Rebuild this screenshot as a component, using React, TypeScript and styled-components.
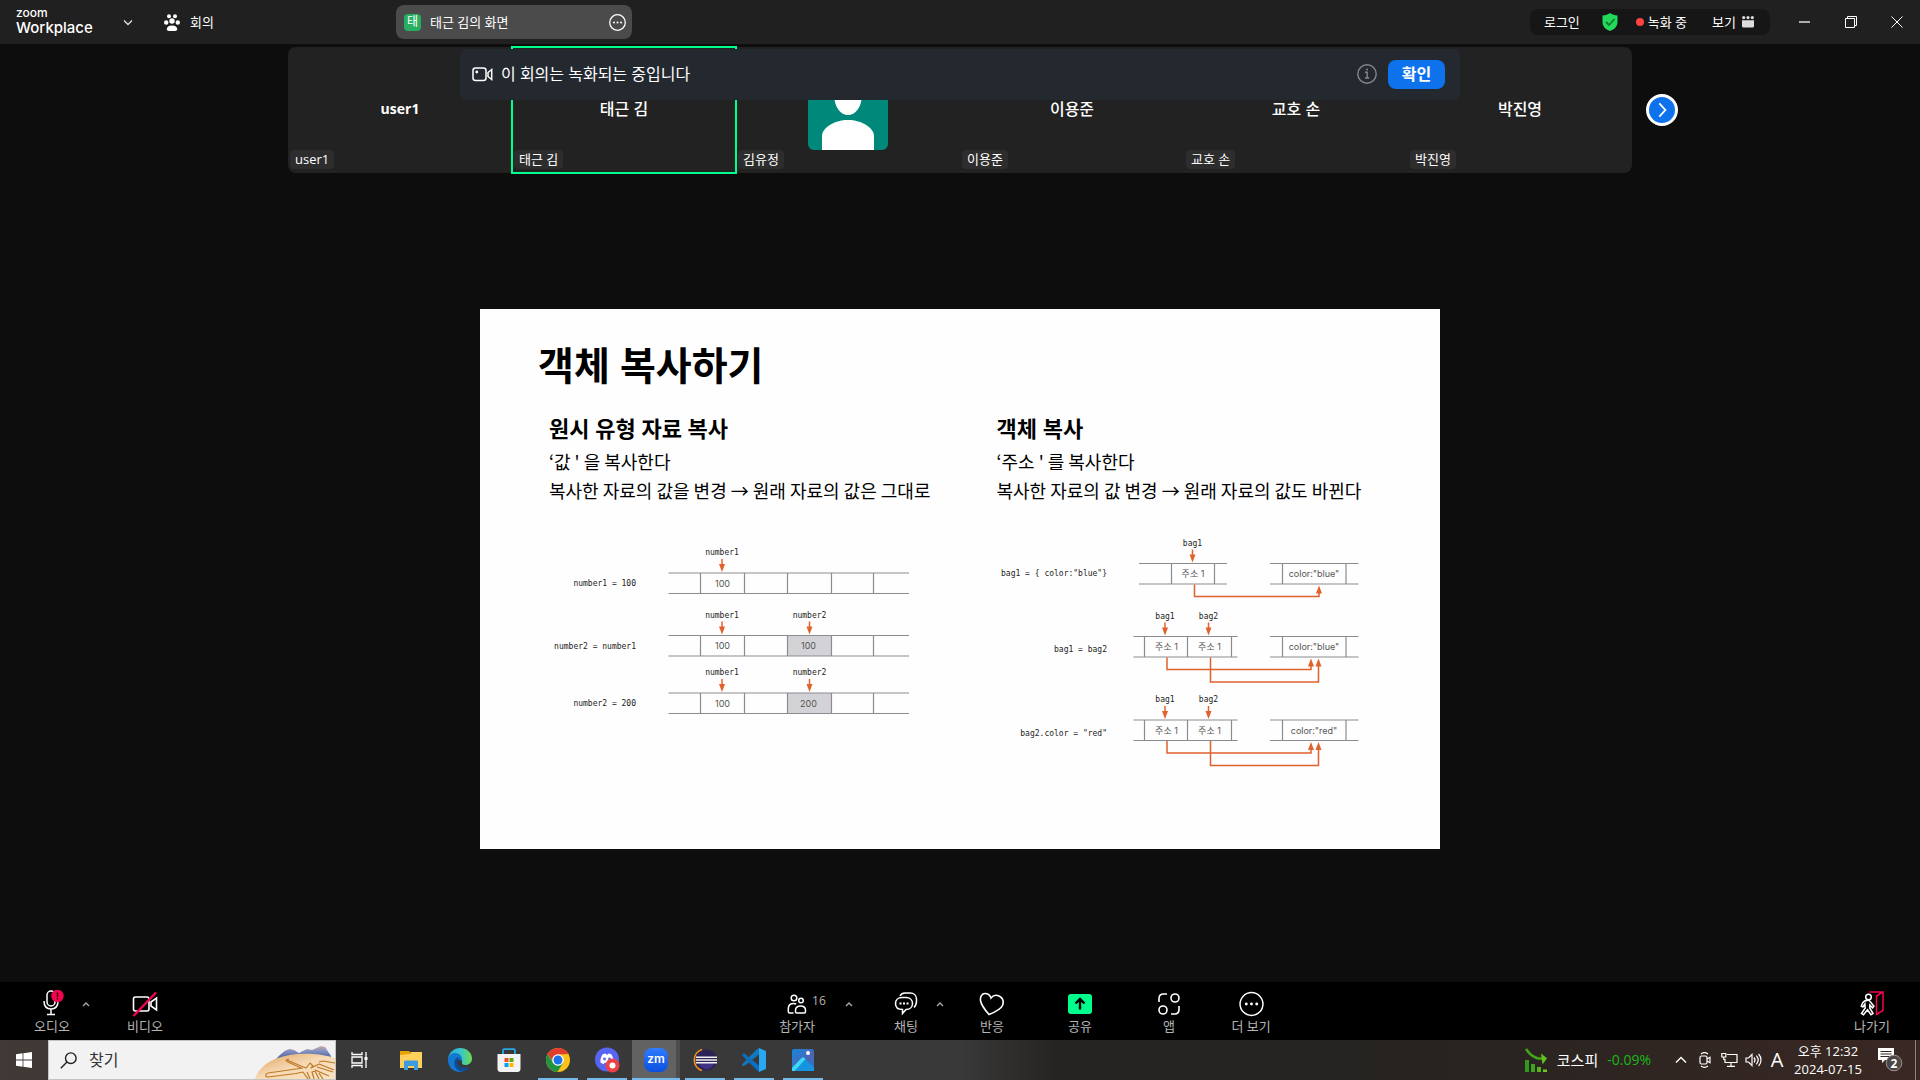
import React from "react";
import styled, { createGlobalStyle } from "styled-components";

const GlobalStyle = createGlobalStyle`
  *, *::before, *::after { box-sizing: border-box; }
  body { margin: 0; background: #0d0d0d; }
  button, input { font: inherit; color: inherit; }
  button { border: 0; padding: 0; background: none; cursor: pointer; }
  h1, h2, p { margin: 0; }
  svg { display: block; flex: none; }
`;

const sans = `"Open Sans", "Noto Sans CJK KR", sans-serif`;
const korean = `"Noto Sans CJK KR", sans-serif`;

const Screen = styled.div`
  display: flex;
  flex-direction: column;
  min-height: 100vh;
  background: #0d0d0d;
  color: #fff;
  font-family: ${sans};
  font-size: 13px;
  line-height: 20px;
`;

/* ---------- Title bar ---------- */

const TitleBar = styled.header`
  display: flex;
  align-items: center;
  height: 44px;
  padding-left: 16px;
  background: #202020;
`;

const Brand = styled.div`
  display: flex;
  flex-direction: column;
  width: 104px;
  font-family: Inter, sans-serif;
`;

const BrandTop = styled.span`
  font-size: 12px;
  font-weight: 500;
  line-height: 12px;
`;

const BrandName = styled.span`
  font-size: 15px;
  font-weight: 500;
  line-height: 18px;
`;

const IconButton = styled.button`
  display: flex;
  align-items: center;
  justify-content: center;
  width: 16px;
  height: 16px;
`;

const MeetingTab = styled.button`
  display: flex;
  align-items: center;
  gap: 10px;
  margin-left: 28px;
`;

const ShareTab = styled.div`
  display: flex;
  align-items: center;
  width: 236px;
  height: 34px;
  margin-left: 182px;
  padding: 0 6px 0 8px;
  border-radius: 8px;
  background: #4b4b4b;
`;

const ShareBadge = styled.span`
  width: 17px;
  height: 17px;
  margin-right: 9px;
  border-radius: 4px;
  background: #27ae60;
  font-size: 12px;
  line-height: 16px;
  text-align: center;
`;

const ShareName = styled.span`
  flex: 1;
`;

const StatusPill = styled.div`
  display: flex;
  align-items: center;
  height: 26px;
  margin-left: auto;
  padding: 0 16px 0 14px;
  border-radius: 8px;
  background: #161616;
`;

const PillButton = styled.button<{ $before?: number; $gap?: number }>`
  display: flex;
  align-items: center;
  gap: ${(p) => p.$gap ?? 6}px;
  margin-left: ${(p) => p.$before ?? 0}px;
`;

const RecordDot = styled.span`
  width: 8px;
  height: 8px;
  border-radius: 50%;
  background: #ff4242;
`;

const WindowControls = styled.div`
  display: flex;
  margin-left: 12px;
`;

const WindowButton = styled.button`
  display: flex;
  align-items: center;
  justify-content: center;
  width: 46px;
  height: 40px;
`;

/* ---------- Gallery ---------- */

const Stage = styled.main`
  position: relative;
  display: flex;
  flex: 1;
  flex-direction: column;
  padding-top: 3px;
`;

const Gallery = styled.section`
  display: grid;
  grid-template-columns: 1fr 70% 1fr;
  align-items: center;
`;

const Strip = styled.div`
  display: grid;
  grid-column: 2;
  grid-template-columns: repeat(6, 1fr);
  height: 126px;
  border-radius: 8px;
  background: #222;
`;

const Tile = styled.article<{ $active?: boolean }>`
  display: grid;
  grid-template-rows: 23px 80px 23px;
  justify-items: center;
  align-items: center;
  outline: ${(p) => (p.$active ? "2px solid #00ff8c" : "none")};
  outline-offset: -1px;
`;

const TileName = styled.strong<{ $latin?: boolean }>`
  grid-row: 2;
  padding-bottom: 2px;
  font-size: ${(p) => (p.$latin ? 14 : 16)}px;
  font-weight: ${(p) => (p.$latin ? 700 : 500)};
`;

const TilePhoto = styled.div`
  grid-row: 2;
`;

const TileTag = styled.span`
  grid-row: 3;
  justify-self: start;
  align-self: start;
  margin-left: 2px;
  padding: 0 5px;
  border-radius: 4px;
  background: #2d2d2d;
  line-height: 19px;
`;

const NextButton = styled.button`
  display: flex;
  align-items: center;
  justify-content: center;
  width: 32px;
  height: 32px;
  margin-left: 14px;
  border: 3px solid #fff;
  border-radius: 50%;
  background: #0e72ed;
`;

const Banner = styled.div`
  position: absolute;
  top: 5px;
  left: 50%;
  display: flex;
  align-items: center;
  width: 1000px;
  max-width: 100%;
  height: 51px;
  padding: 0 15px 1px 12px;
  border-radius: 6px;
  background: #242930;
  transform: translateX(-50%);
  font-size: 16px;
`;

const BannerText = styled.span`
  flex: 1;
  margin-left: 8px;
`;

const ConfirmButton = styled.button`
  width: 57px;
  height: 29px;
  margin-left: 11px;
  border-radius: 8px;
  background: #0e72ed;
  font-weight: 700;
`;

/* ---------- Shared slide ---------- */

const SlideArea = styled.div`
  display: flex;
  flex: 1;
  align-items: center;
  justify-content: center;
  padding-top: 3px;
`;

const Slide = styled.section`
  width: 50%;
  min-width: 960px;
  aspect-ratio: 16 / 9;
  padding: 31px 0 0 58px;
  background: #fefefe;
  color: #000;
`;

const SlideTitle = styled.h1`
  font-size: 39px;
  font-weight: 700;
  line-height: 50px;
`;

const Columns = styled.div`
  display: grid;
  grid-template-columns: 1fr 1fr;
  column-gap: 4px;
  margin-top: 21px;
  padding-left: 11px;
`;

const Column = styled.div`
  font-family: ${korean};
  font-size: 18px;
  line-height: 29px;
`;

const ColumnTitle = styled.h2`
  margin-bottom: 2px;
  font-family: ${sans};
  font-size: 22px;
  font-weight: 700;
  line-height: 34px;
`;

const Diagram = styled.svg`
  margin-top: 27px;
  overflow: visible;
  fill: none;

  .rule { stroke: #8c8c90; stroke-width: 1.2; }
  .link { stroke: #e0622c; stroke-width: 1.5; }
  .head { fill: #e0622c; }
  .code { fill: #222; font: 8px "DejaVu Sans Mono", monospace; }
  .cell { fill: #555; font: 9px Inter, ${korean}; }
`;

/* ---------- Meeting toolbar ---------- */

const Toolbar = styled.footer`
  display: grid;
  grid-template-columns: 6fr auto 5fr;
  height: 58px;
  background: #000;
`;

const ToolGroup = styled.div<{ $end?: boolean }>`
  display: flex;
  justify-content: ${(p) => (p.$end ? "flex-end" : "flex-start")};
  padding: 0 ${(p) => (p.$end ? 20 : 0)}px;
`;

const Tool = styled.button<{ $before?: number }>`
  position: relative;
  display: flex;
  flex-direction: column;
  align-items: center;
  width: 56px;
  margin-left: ${(p) => p.$before ?? 0}px;
  padding-top: 8px;
  color: #b4b4b4;
  font-size: 13px;
  line-height: 16px;
  white-space: nowrap;

  svg { height: 28px; }
`;

const Caret = styled.button<{ $before?: number }>`
  display: flex;
  align-items: center;
  justify-content: center;
  width: 12px;
  height: 44px;
  margin-left: ${(p) => p.$before ?? 0}px;
`;

const Count = styled.span`
  position: absolute;
  top: 11px;
  left: 43px;
  font-size: 12px;
`;

/* ---------- Windows taskbar ---------- */

const Taskbar = styled.nav`
  display: flex;
  height: 40px;
  background: linear-gradient(90deg, #403935 0, #383838 18%, #393939 50%, #262422 55%, #262321 74%, #3a2823 100%);
`;

const TaskButton = styled.button<{ $running?: boolean; $active?: boolean }>`
  display: flex;
  align-items: center;
  justify-content: center;
  width: 48px;
  height: 40px;
  background: ${(p) =>
    p.$active
      ? "linear-gradient(#76b9ed, #76b9ed) bottom / 48px 2px no-repeat, linear-gradient(90deg, #626262 44px, #4c4c4c 44px)"
      : p.$running
        ? "linear-gradient(#76b9ed, #76b9ed) bottom / 40px 2px no-repeat"
        : "none"};
`;

const AppRow = styled.div`
  display: flex;
  gap: 1px;
  margin-left: 3px;
`;

const SearchBox = styled.label`
  display: flex;
  align-items: center;
  width: 288px;
  padding-left: 11px;
  border: 1px solid #c4c4c4;
  background: #f2f2f2;
  color: #333;
`;

const SearchInput = styled.input`
  flex: 1;
  min-width: 0;
  margin-left: 12px;
  padding: 0;
  border: 0;
  outline: 0;
  background: transparent;
  font-size: 16px;

  &::placeholder { color: #333; opacity: 1; }
`;

const Tray = styled.div`
  display: flex;
  align-items: center;
  margin-left: auto;
  padding-right: 4px;
`;

const Stock = styled.button`
  display: flex;
  align-items: center;
  gap: 9px;
  margin-right: 18px;
  font-size: 15px;
`;

const Change = styled.span`
  color: #18b818;
  font-size: 14px;
`;

const TrayIcons = styled.div`
  display: flex;
  align-items: center;
`;

const TrayButton = styled.button`
  display: flex;
  align-items: center;
  justify-content: center;
  width: 24px;
  height: 40px;
  font-size: 20px;
`;

const Clock = styled.time`
  width: 78px;
  font-size: 13px;
  line-height: 18px;
  text-align: center;
`;

const NoticeButton = styled.button`
  width: 49px;
  height: 40px;
  border-right: 1px solid #8d8480;

  svg { margin-left: 10px; }
`;

/* ---------- Drawings ---------- */

const Chevron = ({ d, size = 12, color = "#ddd" }: { d: string; size?: number; color?: string }) => (
  <svg width={size} height={size} viewBox="0 0 12 12" fill="none" stroke={color} strokeWidth="1.4">
    <path d={d} />
  </svg>
);

const UP = "M3 8l3-3 3 3";
const DOWN = "M2 4.5l4 4 4-4";

const PawIcon = () => (
  <svg width="16" height="17" viewBox="0 0 16 17" fill="#fff">
    <circle cx="5" cy="2.2" r="2" /><circle cx="11" cy="2.2" r="2" />
    <circle cx="2.2" cy="8.5" r="2.2" /><circle cx="13.8" cy="8.5" r="2.2" />
    <circle cx="8" cy="7" r="2.7" />
    <path d="M8 11.4c3.4 0 5.2 1.6 5.2 3.6 0 1.4-1 1.9-2 1.9H4.800c-1 0-2-.5-2-1.900 0-2 1.800-3.600 5.200-3.600z" />
  </svg>
);

const DotsIcon = ({ size, stroke = 1.4 }: { size: number; stroke?: number }) => (
  <svg width={size} height={size} viewBox="0 0 24 24">
    <circle cx="12" cy="12" r="11" fill="none" stroke="#fff" strokeWidth={stroke} />
    <circle cx="7" cy="12" r="1.400" fill="#fff" /><circle cx="12" cy="12" r="1.400" fill="#fff" /><circle cx="17" cy="12" r="1.400" fill="#fff" />
  </svg>
);

const ShieldIcon = () => (
  <svg width="18" height="18" viewBox="0 0 18 18">
    <path d="M9 0c2 1.700 4.600 2.400 7.500 2.500V9c0 4.300-3 7.500-7.500 9-4.500-1.500-7.500-4.700-7.500-9V2.500C4.400 2.400 7 1.700 9 0z" fill="#23d959" />
    <path d="M5 9l3 3 5.500-6" fill="none" stroke="#173" strokeWidth="1.800" />
  </svg>
);

const ViewIcon = () => (
  <svg width="12" height="12" viewBox="0 0 12 12" fill="#ddd">
    <circle cx="1.700" cy="1.600" r="1.600" /><circle cx="6" cy="1.600" r="1.600" /><circle cx="10.300" cy="1.600" r="1.600" />
    <path d="M0 4.200h12V10a1.500 1.500 0 0 1-1.500 1.500h-9A1.500 1.500 0 0 1 0 10z" />
  </svg>
);

const RecordCamIcon = () => (
  <svg width="21" height="15" viewBox="0 0 21 15" fill="none" stroke="#fff" strokeWidth="1.500">
    <rect x="1" y="1" width="13" height="12.500" rx="2.500" />
    <path d="M16 5.500l3.700-3v10l-3.700-3z" /><circle cx="4.800" cy="5" r="1.400" fill="#fff" stroke="none" />
  </svg>
);

const InfoIcon = () => (
  <svg width="20" height="20" viewBox="0 0 20 20" fill="none" stroke="#83878c" strokeWidth="1.400">
    <circle cx="10" cy="10" r="9.200" /><path d="M8 8.300h2.200V14M8 14h4.200" /><circle cx="10" cy="5.500" r="1" fill="#83878c" stroke="none" />
  </svg>
);

const Avatar = () => (
  <svg width="80" height="80" viewBox="0 0 80 80">
    <rect width="80" height="80" rx="6" fill="#00897b" />
    <ellipse cx="40" cy="27" rx="13.500" ry="18" fill="#fff" />
    <path d="M14 80V66c0-8 12-16 26-16s26 8 26 16v14z" fill="#fff" />
  </svg>
);

const MicIcon = () => (
  <svg width="26" height="28" viewBox="0 0 26 28" fill="none" stroke="#fff" strokeWidth="1.500">
    <rect x="8" y="1" width="8" height="15" rx="4" /><path d="M5 11c0 5 2.500 8 7 8s7-3 7-8M12 19v5M8 24.500h8" />
    <circle cx="18.500" cy="6" r="6.200" fill="#f5054f" stroke="none" /><path d="M18.500 2.500v4.500M18.500 8v1.600" stroke="#400" strokeWidth="1.600" />
  </svg>
);

const CamOffIcon = () => (
  <svg width="26" height="28" viewBox="0 0 26 28" fill="none" stroke="#fff" strokeWidth="1.600">
    <rect x="1.500" y="7" width="15.500" height="14" rx="2" /><path d="M19 12l5.500-4v12L19 16z" />
    <path d="M1.500 26L24 2.500" stroke="#f5054f" strokeWidth="2.400" />
  </svg>
);

const PeopleIcon = () => (
  <svg width="20" height="28" viewBox="0 0 20 28" fill="none" stroke="#fff" strokeWidth="1.500">
    <circle cx="7" cy="8" r="2.800" /><circle cx="14" cy="10.500" r="2.300" />
    <path d="M6.500 23H2.800c-1 0-1.500-.5-1.500-1.500v-3c0-3 2-5 5.500-5 1 0 1.800.2 2.400.5M13.500 16c3 0 5 1.700 5 4.300v1.500c0 .8-.5 1.200-1.200 1.200H9.700c-.7 0-1.200-.4-1.200-1.200v-1.500c0-2.600 2-4.300 5-4.300z" />
  </svg>
);

const ChatIcon = () => (
  <svg width="24" height="28" viewBox="0 0 24 28" fill="none" stroke="#fff" strokeWidth="1.500">
    <path d="M6 6c1-2 2.500-3 5-3h5c4 0 6.500 2.500 6.500 6v2c0 3.500-.8 5-2.500 6.500" />
    <path d="M8 7.500h4c4 0 6.500 2.500 6.500 6s-2.500 6-6.500 6l-3.500 4v-4c-4.500 0-7-2.500-7-6s2.500-6 6.500-6z" />
    <path d="M5.500 13.500h2M9 13.500h2M12.500 13.500h2" strokeWidth="2" />
  </svg>
);

const HeartIcon = () => (
  <svg width="26" height="28" viewBox="0 0 26 28" fill="none" stroke="#fff" strokeWidth="1.600">
    <path d="M10 24.500C6 20 2.500 16 1.600 11 .8 6.500 3 3.500 6 3.500c3 0 5 1.500 6 4.500 2-2.500 5-3.500 8-2 3.500 1.800 5 5.500 3.500 9.500-1.500 3.500-6 6-13.500 9z" />
  </svg>
);

const ShareIcon = () => (
  <svg width="24" height="28" viewBox="0 0 24 28">
    <rect y="4" width="24" height="20" rx="3" fill="#00ff8c" />
    <path d="M12 19.500V9.500M7.500 13.500L12 9l4.500 4.500" fill="none" stroke="#000" strokeWidth="2.400" />
  </svg>
);

const AppsIcon = () => (
  <svg width="22" height="28" viewBox="0 0 22 28" fill="none" stroke="#fff" strokeWidth="1.600">
    <circle cx="17" cy="8" r="4" /><circle cx="5" cy="20" r="4" />
    <path d="M1 12V8.500C1 5.500 2.500 4 5.500 4H9M13 24h3.500c3 0 4.500-1.500 4.500-4.500V16" />
  </svg>
);

const LeaveIcon = () => (
  <svg width="24" height="28" viewBox="0 0 24 28" fill="none" strokeWidth="1.500">
    <path d="M9.500 2H23v18.500l-6.500 4V6L23 2" stroke="#f5054f" />
    <g stroke="#fff">
      <circle cx="8.500" cy="7" r="2.800" />
      <path d="M8 10.200c-3 0-4.500 1-5.500 3l-1.200 3 1.600.8 2-3 .3 4-3.700 5.500 2 1.200 4-5 3.500 5 2-1.200-3.200-5.500v-3l2.700 2.800 1.400-1.600-3.400-4.200c-.6-1.200-1.300-1.800-2.500-1.800z" />
    </g>
  </svg>
);

const WindowsIcon = () => (
  <svg width="16" height="16" viewBox="0 0 16 16" fill="#fff">
    <path d="M0 2.200L6.600 1.300v6.300H0zM7.400 1.200L16 0v7.600H7.400zM0 8.400h6.600v6.300L0 13.800zM7.400 8.400H16V16l-8.600-1.200z" />
  </svg>
);

const SearchIcon = () => (
  <svg width="17" height="17" viewBox="0 0 17 17" fill="none" stroke="#222" strokeWidth="1.400">
    <circle cx="10.800" cy="6.200" r="5.300" /><path d="M7 10L.8 16.200" />
  </svg>
);

const HandsArt = () => (
  <svg width="80" height="38" viewBox="0 0 80 38">
    <defs>
      <linearGradient id="hill" x2="0" y2="1"><stop stopColor="#c9a8ae" /><stop offset="0.400" stopColor="#7f8fc0" /><stop offset="1" stopColor="#3f5690" /></linearGradient>
      <linearGradient id="hand" x2="1" y2="1"><stop stopColor="#dfa05d" /><stop offset="0.500" stopColor="#f7d9b4" /><stop offset="1" stopColor="#f9e2c4" /></linearGradient>
    </defs>
    <path d="M20 19c4-4 9-10 15-11l4 1 5 3 8-4 5 1 9-4 4 1 6 9v4H20z" fill="url(#hill)" />
    <path d="M0 38c3-9 10-16 20-20 12-5 26-6 38-5 8 .5 15 2 22 4v21z" fill="url(#hand)" />
    <path
      d="M48 27L13 32c-3 .5-3 4 0 4l28-3.500 7-1.500M32 19l14 6 5 2 4-5 3 3-2 2 8-4 15 6M34 18c-3 0-4 2-1 3l13 6M80 22l-12-2-4 1M62 26l16 5M60 29l14 6M55 38l-3-7M59 38l-2-7 3-1 4 8M64 32l4 6M48 31l5 7"
      fill="none" stroke="#bd7a26" strokeWidth="1.200" strokeLinejoin="round"
    />
  </svg>
);

const TaskViewIcon = () => (
  <svg width="18" height="16" viewBox="0 0 18 16" fill="none" stroke="#fff" strokeWidth="1.300">
    <path d="M1 0v2.500h10V0M1 16v-2.500h10V16M1 5h10v6H1zM15 0v16" /><path d="M13.500 5h3v3h-3z" fill="#fff" stroke="none" />
  </svg>
);

const FolderIcon = () => (
  <svg width="22" height="20" viewBox="0 0 22 20">
    <path d="M0 1h9l2 2h-1v5H0z" fill="#e8a200" /><path d="M0 5l10-1 1-2h11v16H0z" fill="#ffd15c" />
    <path d="M4 20v-8c0-1 .6-1.500 1.500-1.500h11c1 0 1.500.5 1.500 1.500v8h-4v-4H8v4z" fill="#3f9bdc" />
  </svg>
);

const EdgeIcon = () => (
  <svg width="24" height="24" viewBox="0 0 24 24">
    <defs>
      <linearGradient id="edgeTop" x2="1"><stop stopColor="#2aa6dc" /><stop offset="0.500" stopColor="#36c3d2" /><stop offset="1" stopColor="#6fdc4d" /></linearGradient>
    </defs>
    <path d="M0 11C1 4 6 0 12 0c7 0 12 5 12 10.500 0 4-3 6.500-6.500 6.500-3 0-4-1-3.500-2.500.8-2.500-.5-5.500-4-6C6 8 2 9 0 11z" fill="url(#edgeTop)" />
    <path d="M0 12c0-4 3-7 7-7 5 0 8 4 7 9-1-3-4-3-5-.5-2 4.500 3 9 10 7C16.500 23 14 24 12 24 5 24 0 19 0 12z" fill="#1279d0" />
    <path d="M9 9.500c-5 4-3 13 5 14.300 3-.6 6-2.200 7.500-4.800-6 2-11 0-12-4-.4-2 .5-4 2.500-4.500z" fill="#114b91" />
  </svg>
);

const StoreIcon = () => (
  <svg width="24" height="24" viewBox="0 0 24 24">
    <path d="M.5 6h23v15c0 1.700-1.300 3-3 3h-17c-1.700 0-3-1.300-3-3z" fill="#f3f3f3" />
    <path d="M6 6V2.500C6 1.700 6.500 1.200 7.300 1.200h9.400c.8 0 1.300.5 1.300 1.300V6" fill="none" stroke="#27a8e8" strokeWidth="1.800" />
    <path d="M7.500 10h4v4h-4z" fill="#f25022" /><path d="M12.500 10h4v4h-4z" fill="#5fa90a" />
    <path d="M7.500 15h4v4h-4z" fill="#00a4ef" /><path d="M12.500 15h4v4h-4z" fill="#ffb900" />
  </svg>
);

const ChromeIcon = () => (
  <svg width="24" height="24" viewBox="0 0 24 24">
    <circle cx="12" cy="12" r="12" fill="#fbc116" />
    <path d="M1.600 6A12 12 0 0 1 22.400 6L12 6.500 8 15z" fill="#e33b2e" />
    <path d="M1.600 6A12 12 0 0 0 11.500 24L17 15l-9 1z" fill="#229342" />
    <circle cx="12" cy="12" r="5.800" fill="#fff" /><circle cx="12" cy="12" r="4.500" fill="#1a73e8" />
  </svg>
);

const DiscordIcon = () => (
  <svg width="26" height="26" viewBox="0 0 26 26">
    <circle cx="13" cy="12.500" r="12" fill="#5865f2" />
    <path d="M8.500 7.500c1.500-.7 2.500-.8 3-.9l.5 1h2l.5-1c.5.1 1.500.2 3 .9 1.500 2.500 2.300 5 2 8-1 .9-2.200 1.300-3.200 1.500l-.8-1.200h-5L9.700 17c-1-.2-2.200-.6-3.200-1.500-.3-3 .5-5.500 2-8z" fill="#fff" />
    <circle cx="10.500" cy="12" r="1.400" fill="#5865f2" /><circle cx="15.500" cy="12" r="1.400" fill="#5865f2" />
    <circle cx="18.500" cy="18.500" r="7" fill="#ed4245" /><circle cx="18.500" cy="18.500" r="3" fill="#fff" />
  </svg>
);

const ZoomTile = styled.span`
  width: 24px;
  height: 24px;
  border-radius: 8px;
  background: linear-gradient(#2f7bff, #0b4fe0);
  font: 600 12px/22px Inter, sans-serif;
  text-align: center;
`;

const EclipseIcon = () => (
  <svg width="24" height="24" viewBox="0 0 24 24">
    <path d="M9 1.500A11 11 0 0 0 9 22.500" fill="none" stroke="#f7941e" strokeWidth="1.600" />
    <circle cx="13.500" cy="12" r="10.500" fill="#2c2255" /><path d="M6 15c1 4 4 6 7.500 6s6.500-2 7.500-6z" fill="#423283" />
    <path d="M3 9.200h21M2.800 12h21.200M3 14.800h21" stroke="#f2f2f2" strokeWidth="1.500" />
  </svg>
);

const CodeIcon = () => (
  <svg width="24" height="24" viewBox="0 0 24 24">
    <path d="M17 0l7 3v18l-7 3z" fill="#2aa7f2" /><path d="M17 6v12l-8-6z" fill="#383838" />
    <path d="M17 0v6.500L3.500 17 1 18.200 0 16.500 14 2z" fill="#0f7fcb" opacity="0.900" />
    <path d="M0 7l2-2 15 12.500V24L5.500 13z" fill="#0a70bd" />
  </svg>
);

const PhotosIcon = () => (
  <svg width="22" height="22" viewBox="0 0 22 22">
    <defs><linearGradient id="photo" x2="1" y2="1"><stop stopColor="#1289dd" /><stop offset="0.600" stopColor="#4f63b4" /><stop offset="1" stopColor="#1a82d4" /></linearGradient></defs>
    <rect width="22" height="22" rx="2" fill="url(#photo)" />
    <path d="M0 19L9.500 9c1-1.100 2-1.100 3 0L22 19v3H0z" fill="#1793df" /><path d="M0 19L9.500 9c1-1.100 2-1.100 3 0l1 1L2.500 22H0z" fill="#3fd8f5" />
    <circle cx="16" cy="4" r="2" fill="#fff" />
  </svg>
);

const StockIcon = () => (
  <svg width="23" height="24" viewBox="0 0 23 24">
    <path d="M1 1c3 5 7 8 12 9.500h7" fill="none" stroke="#45a31a" strokeWidth="2.600" /><path d="M16 5.500l6 4.800-4.500 6.200z" fill="#66c11e" />
    <path d="M0 12h4v12H0z" fill="#2f9a1b" /><path d="M6 16h4v8H6z" fill="#3da41c" /><path d="M12 19h4v5h-4z" fill="#56b51d" /><path d="M18 21.500h4V24h-4z" fill="#71c81f" />
  </svg>
);

const MeetNowIcon = () => (
  <svg width="12" height="16" viewBox="0 0 12 16" fill="none" stroke="#fff" strokeWidth="1.200">
    <rect x="1" y="4" width="7" height="8" rx="1.500" /><path d="M8 7l3-1.800v5.600L8 9M2 2c2-1.500 5-1.500 7 0M2 14c2 1.500 5 1.500 7 0" />
  </svg>
);

const NetworkIcon = () => (
  <svg width="17" height="16" viewBox="0 0 17 16" fill="none" stroke="#fff" strokeWidth="1.200">
    <path d="M6 2.500h10v8H4V7M10 10.500V14M6 14.300h8M.8 1.500h4V5H.8zM2.800 5v3" />
  </svg>
);

const VolumeIcon = () => (
  <svg width="17" height="16" viewBox="0 0 17 16" fill="none" stroke="#fff" strokeWidth="1.200">
    <path d="M1 6h2.500L7 2.500v11L3.500 10H1zM9 5.500c1.300 1.500 1.300 3.500 0 5M11.300 3.700c2.300 2.500 2.300 6 0 8.600M13.600 2c3.200 3.500 3.200 8.500 0 12" />
  </svg>
);

const NoticeIcon = () => (
  <svg width="26" height="26" viewBox="0 0 26 26">
    <path d="M1 1h16v12H8l-3 3v-3H1z" fill="#fff" /><path d="M3.500 4.500h11M3.500 7h11M3.500 9.500h11" stroke="#35251f" strokeWidth="1.100" />
    <circle cx="17" cy="16" r="7.800" fill="#4a4644" stroke="#99918d" />
    <text x="17" y="20.500" fill="#fff" fontSize="12" fontWeight="700" textAnchor="middle">2</text>
  </svg>
);

/* ---------- Memory diagrams ---------- */

const Pointer = ({ x, y, label }: { x: number; y: number; label: string }) => (
  <g>
    <text className="code" x={x} y={y - 18} textAnchor="middle">{label}</text>
    <path className="link" d={`M${x} ${y - 14}v8`} />
    <path className="head" d={`M${x - 3} ${y - 9}h6l-3 8z`} />
  </g>
);

const Link = ({ from, to, y, drop }: { from: number; to: number; y: number; drop: number }) => (
  <g>
    <path className="link" d={`M${from} ${y + 21}V${y + drop}H${to}V${y + 27}`} />
    <path className="head" d={`M${to - 3} ${y + 30}h6l-3 -8z`} />
  </g>
);

const Memory = ({ y, start, end, walls }: { y: number; start: number; end: number; walls: number[] }) => (
  <path className="rule" d={`M${start} ${y}H${end}M${start} ${y + 20.5}H${end}` + walls.map((x) => `M${x} ${y}v20.5`).join("")} />
);

const primitiveRows = [
  { y: 573, code: "number1 = 100", second: "" },
  { y: 635.5, code: "number2 = number1", second: "100" },
  { y: 693, code: "number2 = 200", second: "200" },
];

const PrimitiveDiagram = () => (
  <Diagram width="364" height="240" viewBox="549 532 364 240">
    {primitiveRows.map((row) => (
      <g key={row.code}>
        <text className="code" x="636" y={row.y + 13} textAnchor="end">{row.code}</text>
        {row.second && <rect x="787.5" y={row.y} width="44" height="20.5" fill="#d3d2d6" />}
        <Memory y={row.y} start={668.5} end={909} walls={[700.5, 744.5, 787.5, 831.5, 873.5]} />
        <Pointer x={722} y={row.y} label="number1" />
        {row.second && <Pointer x={809.5} y={row.y} label="number2" />}
        <text className="cell" x="722.5" y={row.y + 13.5} textAnchor="middle">100</text>
        <text className="cell" x="808.5" y={row.y + 13.5} textAnchor="middle">{row.second}</text>
      </g>
    ))}
  </Diagram>
);

const copyRows = [
  { y: 636.5, code: "bag1 = bag2", value: 'color:"blue"' },
  { y: 720, code: 'bag2.color = "red"', value: 'color:"red"' },
];

const ObjectDiagram = () => (
  <Diagram width="364" height="240" viewBox="996 532 364 240">
    <text className="code" x="1106" y="576" textAnchor="end">{'bag1 = { color:"blue"}'}</text>
    <Memory y={563.5} start={1138} end={1226} walls={[1170.5, 1213.5]} />
    <Memory y={563.5} start={1269} end={1357.5} walls={[1281.5, 1345]} />
    <Pointer x={1191.5} y={563.5} label="bag1" />
    <text className="cell" x="1192" y="577" textAnchor="middle">주소 1</text>
    <text className="cell" x="1313" y="577" textAnchor="middle">{'color:"blue"'}</text>
    <Link from={1193.5} to={1318} y={563.5} drop={33} />
    {copyRows.map((row) => (
      <g key={row.code}>
        <text className="code" x="1106" y={row.y + 15.5} textAnchor="end">{row.code}</text>
        <Memory y={row.y} start={1132.5} end={1236.5} walls={[1143.5, 1186.5, 1230.5]} />
        <Memory y={row.y} start={1269} end={1357.5} walls={[1281.5, 1345]} />
        <Pointer x={1164} y={row.y} label="bag1" />
        <Pointer x={1207.5} y={row.y} label="bag2" />
        <text className="cell" x="1165.500" y={row.y + 13.5} textAnchor="middle">주소 1</text>
        <text className="cell" x="1208.500" y={row.y + 13.5} textAnchor="middle">주소 1</text>
        <text className="cell" x="1313" y={row.y + 13.5} textAnchor="middle">{row.value}</text>
        <Link from={1166} to={1310} y={row.y} drop={33} />
        <Link from={1209.5} to={1317.5} y={row.y} drop={45.5} />
      </g>
    ))}
  </Diagram>
);

/* ---------- Page ---------- */

const people = [
  { name: "user1", latin: true },
  { name: "태근 김", active: true },
  { name: "김유정", avatar: true },
  { name: "이용준" },
  { name: "교호 손" },
  { name: "박진영" },
];

const apps = [
  { name: "파일 탐색기", icon: <FolderIcon /> },
  { name: "Edge", icon: <EdgeIcon /> },
  { name: "Store", icon: <StoreIcon /> },
  { name: "Chrome", icon: <ChromeIcon />, running: true },
  { name: "Discord", icon: <DiscordIcon />, running: true },
  { name: "Zoom", icon: <ZoomTile>zm</ZoomTile>, active: true },
  { name: "Eclipse", icon: <EclipseIcon />, running: true },
  { name: "VS Code", icon: <CodeIcon />, running: true },
  { name: "사진", icon: <PhotosIcon />, running: true },
];

export default function App() {
  return (
    <Screen>
      <GlobalStyle />
      <TitleBar>
        <Brand>
          <BrandTop>zoom</BrandTop>
          <BrandName>Workplace</BrandName>
        </Brand>
        <IconButton aria-label="메뉴"><Chevron d={DOWN} /></IconButton>
        <MeetingTab><PawIcon />회의</MeetingTab>
        <ShareTab>
          <ShareBadge>태</ShareBadge>
          <ShareName>태근 김의 화면</ShareName>
          <IconButton aria-label="옵션"><DotsIcon size={17} stroke={1.8} /></IconButton>
        </ShareTab>
        <StatusPill>
          <PillButton>로그인</PillButton>
          <PillButton $before={21} aria-label="보안"><ShieldIcon /></PillButton>
          <PillButton $before={17} $gap={4}><RecordDot />녹화 중</PillButton>
          <PillButton $before={25}>보기<ViewIcon /></PillButton>
        </StatusPill>
        <WindowControls>
          <WindowButton aria-label="최소화">
            <svg width="12" height="12" viewBox="0 0 12 12"><path d="M0 6h11" stroke="#ddd" strokeWidth="1.500" /></svg>
          </WindowButton>
          <WindowButton aria-label="이전 크기로">
            <svg width="12" height="12" viewBox="0 0 12 12" fill="none" stroke="#fff"><path d="M.5 2.500h9v9h-9zM2.500 2.500v-2h9v9h-2" /></svg>
          </WindowButton>
          <WindowButton aria-label="닫기">
            <svg width="12" height="12" viewBox="0 0 12 12" stroke="#fff"><path d="M.5.5l11 11M11.500.5l-11 11" /></svg>
          </WindowButton>
        </WindowControls>
      </TitleBar>

      <Stage>
        <Gallery>
          <Strip>
            {people.map((p) => (
              <Tile key={p.name} $active={p.active}>
                {p.avatar ? <TilePhoto><Avatar /></TilePhoto> : <TileName $latin={p.latin}>{p.name}</TileName>}
                <TileTag>{p.name}</TileTag>
              </Tile>
            ))}
          </Strip>
          <NextButton aria-label="다음"><Chevron d="M4 1l4.500 5L4 11" size={16} color="#fff" /></NextButton>
        </Gallery>

        <SlideArea>
          <Slide>
            <SlideTitle>객체 복사하기</SlideTitle>
            <Columns>
              <Column>
                <ColumnTitle>원시 유형 자료 복사</ColumnTitle>
                <p>‘값 ' 을 복사한다</p>
                <p>복사한 자료의 값을 변경 → 원래 자료의 값은 그대로</p>
                <PrimitiveDiagram />
              </Column>
              <Column>
                <ColumnTitle>객체 복사</ColumnTitle>
                <p>‘주소 ' 를 복사한다</p>
                <p>복사한 자료의 값 변경 → 원래 자료의 값도 바뀐다</p>
                <ObjectDiagram />
              </Column>
            </Columns>
          </Slide>
        </SlideArea>

        <Banner role="status">
          <RecordCamIcon />
          <BannerText>이 회의는 녹화되는 중입니다</BannerText>
          <InfoIcon />
          <ConfirmButton>확인</ConfirmButton>
        </Banner>
      </Stage>

      <Toolbar>
        <ToolGroup>
          <Tool $before={24}><MicIcon />오디오</Tool>
          <Caret aria-label="오디오 옵션"><Chevron d={UP} color="#aaa" /></Caret>
          <Tool $before={25}><CamOffIcon />비디오</Tool>
        </ToolGroup>
        <ToolGroup>
          <Tool><PeopleIcon />참가자<Count>16</Count></Tool>
          <Caret $before={18} aria-label="참가자 옵션"><Chevron d={UP} color="#aaa" /></Caret>
          <Tool $before={23}><ChatIcon />채팅</Tool>
          <Caret aria-label="채팅 옵션"><Chevron d={UP} color="#aaa" /></Caret>
          <Tool $before={18}><HeartIcon />반응</Tool>
          <Tool $before={32}><ShareIcon />공유</Tool>
          <Tool $before={33}><AppsIcon />앱</Tool>
          <Tool $before={26}><DotsIcon size={25} />더 보기</Tool>
        </ToolGroup>
        <ToolGroup $end>
          <Tool><LeaveIcon />나가기</Tool>
        </ToolGroup>
      </Toolbar>

      <Taskbar>
        <TaskButton aria-label="시작"><WindowsIcon /></TaskButton>
        <SearchBox>
          <SearchIcon />
          <SearchInput type="text" placeholder="찾기" aria-label="찾기" />
          <HandsArt />
        </SearchBox>
        <TaskButton aria-label="작업 보기"><TaskViewIcon /></TaskButton>
        <AppRow>
          {apps.map((a) => (
            <TaskButton key={a.name} aria-label={a.name} $running={a.running} $active={a.active}>{a.icon}</TaskButton>
          ))}
        </AppRow>
        <Tray>
          <Stock><StockIcon />코스피<Change>-0.09%</Change></Stock>
          <TrayIcons>
            <TrayButton aria-label="숨겨진 아이콘"><Chevron d="M1 8.500l5-5 5 5" color="#fff" /></TrayButton>
            <TrayButton aria-label="모임 시작"><MeetNowIcon /></TrayButton>
            <TrayButton aria-label="네트워크"><NetworkIcon /></TrayButton>
            <TrayButton aria-label="볼륨"><VolumeIcon /></TrayButton>
            <TrayButton>A</TrayButton>
          </TrayIcons>
          <Clock>오후 12:32<br />2024-07-15</Clock>
          <NoticeButton aria-label="알림"><NoticeIcon /></NoticeButton>
        </Tray>
      </Taskbar>
    </Screen>
  );
}
